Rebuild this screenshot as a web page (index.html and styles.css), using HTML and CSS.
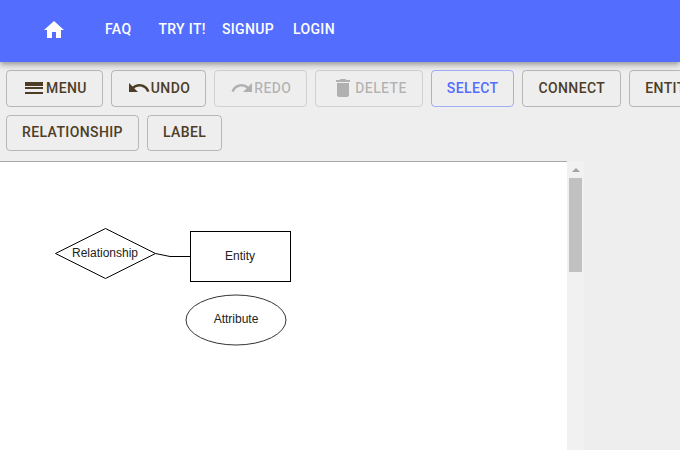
FILE: index.html
```html
<!DOCTYPE html>
<html lang="en">
<head>
<meta charset="utf-8">
<title>ER Diagram Tool</title>
<link rel="stylesheet" href="styles.css">
</head>
<body>
<div class="page">
  <header class="appbar">
    <svg class="home" viewBox="0 0 24 24"><path d="M10 20v-6h4v6h5v-8h3L12 3 2 12h3v8z"/></svg>
    <a class="nav nav-faq">FAQ</a>
    <a class="nav nav-try">TRY IT!</a>
    <a class="nav nav-signup">SIGNUP</a>
    <a class="nav nav-login">LOGIN</a>
  </header>
  <div class="toolbar">
    <div class="row">
      <button class="btn"><svg class="ico" viewBox="0 0 24 24"><path d="M3 18h18v-2H3v2zm0-5h18v-2H3v2zm0-5v2h18V6H3z"/></svg>Menu</button>
      <button class="btn"><svg class="ico" viewBox="0 0 24 24"><path d="M12.5 8c-2.65 0-5.05.99-6.9 2.6L2 7v9h9l-3.62-3.62c1.39-1.16 3.16-1.88 5.12-1.88 3.54 0 6.55 2.31 7.6 5.5l2.37-.78C21.08 11.03 17.15 8 12.5 8z"/></svg>Undo</button>
      <button class="btn off"><svg class="ico" viewBox="0 0 24 24"><path d="M18.4 10.6C16.55 8.99 14.15 8 11.5 8c-4.65 0-8.58 3.03-9.96 7.22L3.9 16c1.05-3.19 4.05-5.5 7.6-5.5 1.95 0 3.73.72 5.12 1.88L13 16h9V7l-3.6 3.6z"/></svg>Redo</button>
      <button class="btn off"><svg class="ico" viewBox="0 0 24 24"><path d="M6 19c0 1.1.9 2 2 2h8c1.1 0 2-.9 2-2V7H6v12zM19 4h-3.5l-1-1h-5l-1 1H5v2h14V4z"/></svg>Delete</button>
      <button class="btn on">Select</button>
      <button class="btn">Connect</button>
      <button class="btn">Entity</button>
    </div>
    <div class="row">
      <button class="btn">Relationship</button>
      <button class="btn">Label</button>
    </div>
  </div>
  <main class="work">
    <div class="canvas">
      <svg class="diagram" viewBox="0 162 567 288">
        <path class="shape" d="M55.500 253.500 105.500 228.500 155.500 253.500 105.500 278.500Z"/>
        <path class="shape" d="M155.500 253.500 170 256.500H190.500"/>
        <rect class="shape" x="190.500" y="231.500" width="100" height="50"/>
        <ellipse class="shape thin" cx="236" cy="320" rx="50" ry="25"/>
        <text class="label" x="105" y="257">Relationship</text>
        <text class="label" x="240" y="260">Entity</text>
        <text class="label" x="236" y="323">Attribute</text>
      </svg>
    </div>
    <div class="scrollbar">
      <div class="arrow"></div>
      <div class="thumb"></div>
    </div>
  </main>
</div>
</body>
</html>
```
FILE: styles.css
```css
* { box-sizing: border-box; }
html, body { margin: 0; height: 100%; }
body { font-family: Roboto, "Liberation Sans", sans-serif; background: #eeeeee; overflow: hidden; }
.page { width: 680px; height: 450px; display: flex; flex-direction: column; overflow: hidden; }

.appbar {
  flex: none; height: 62px; background: #536dfe; display: flex; align-items: center;
  padding: 0 0 5px 42px; position: relative; z-index: 1;
  box-shadow: 0 2px 4px -1px rgba(0,0,0,.2), 0 4px 5px 0 rgba(0,0,0,.14), 0 1px 10px 0 rgba(0,0,0,.12);
}
.home { width: 24px; height: 24px; fill: #fff; margin-top: 3px; }
.nav { color: #fff; font-size: 14px; font-weight: 500; letter-spacing: .35px; line-height: 20px; }
.nav-faq { margin-left: 39px; }
.nav-try { margin-left: 27px; }
.nav-signup { margin-left: 16px; }
.nav-login { margin-left: 19px; }

.toolbar { flex: none; padding: 8px 0 10px 6px; display: flex; flex-direction: column; gap: 8px; }
.row { display: flex; gap: 8px; height: 36.5px; }
.btn {
  flex: none; display: inline-flex; align-items: center; height: 36.5px; padding: 5px 15px 6px;
  border: 1px solid rgba(0,0,0,.23); border-radius: 4px; background: transparent;
  font-family: inherit; font-size: 14px; font-weight: 500; line-height: 24px;
  letter-spacing: .39px; text-transform: uppercase; color: #4d3d26;
}
.ico { width: 24px; height: 24px; fill: currentColor; flex: none; }
.off { color: rgba(0,0,0,.26); border-color: rgba(0,0,0,.12); }
.on { color: #536dfe; border-color: rgba(83,109,254,.5); }

.work { flex: 1; min-height: 0; display: flex; }
.canvas { width: 567px; background: #fff; border-top: 1px solid #a9a9a9; }
.diagram { display: block; width: 567px; height: 288px; }
.shape { fill: none; stroke: #000; stroke-width: 1; }
.thin { stroke: #333; }
.label { font-family: "Liberation Sans", Arial, sans-serif; font-size: 12px; text-anchor: middle; fill: #222; }

.scrollbar { width: 17px; background: #f1f1f1; display: flex; flex-direction: column; align-items: center; }
.arrow { margin-top: 7px; width: 0; height: 0; border-left: 4px solid transparent; border-right: 4px solid transparent; border-bottom: 4px solid #a3a3a3; }
.thumb { margin-top: 6px; width: 13px; height: 94px; background: #c1c1c1; }
```
